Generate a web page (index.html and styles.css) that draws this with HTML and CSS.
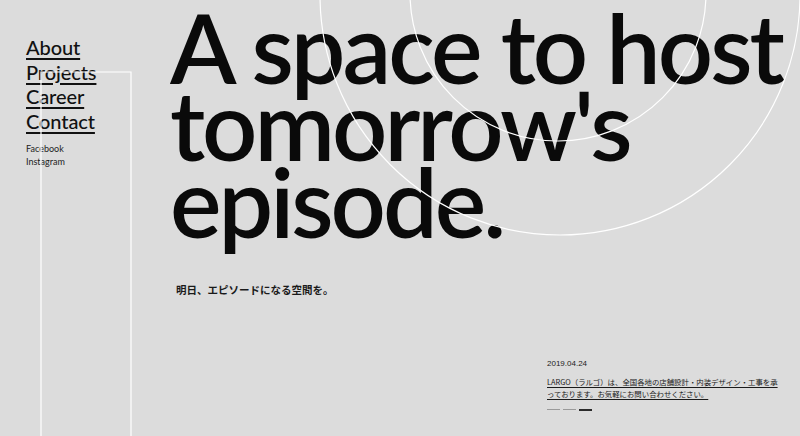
FILE: index.html
```html
<!DOCTYPE html>
<html lang="ja">
<head>
<meta charset="utf-8">
<title>LARGO</title>
<link rel="stylesheet" href="styles.css">
</head>
<body>
<div class="page">
  <nav class="side">
    <ul class="menu">
      <li><a href="#">About</a></li>
      <li><a href="#">Projects</a></li>
      <li><a href="#">Career</a></li>
      <li><a href="#">Contact</a></li>
    </ul>
    <ul class="social">
      <li><a href="#">Facebook</a></li>
      <li><a href="#">Instagram</a></li>
    </ul>
  </nav>
  <main class="main">
    <h1 class="headline">A space to host<br>tomorrow's<br>episode.</h1>
    <p class="sub">明日、エピソードになる空間を。</p>
    <section class="news">
      <p class="news-date">2019.04.24</p>
      <p class="news-text"><a href="#">LARGO（ラルゴ）は、全国各地の店舗設計・内装デザイン・工事を承っております。お気軽にお問い合わせください。</a></p>
      <div class="pager">
        <span class="dash"></span>
        <span class="dash"></span>
        <span class="dash is-active"></span>
      </div>
    </section>
  </main>
  <svg class="deco" width="800" height="436" viewBox="0 0 800 436" aria-hidden="true">
    <path d="M41 436 V72 H131 V436" fill="none" stroke="#ffffff" stroke-width="1.2"/>
    <circle cx="560" cy="-5" r="240" fill="none" stroke="#ffffff" stroke-width="1.2"/>
    <circle cx="558" cy="-7" r="148" fill="none" stroke="#ffffff" stroke-width="1.2"/>
  </svg>
</div>
</body>
</html>
```
FILE: styles.css
```css
html, body {
  margin: 0;
  padding: 0;
  background: #dcdcdc;
}

.page {
  position: relative;
  display: flex;
  width: 800px;
  height: 436px;
  overflow: hidden;
  background: #dcdcdc;
  color: #0b0b0b;
  font-family: "Lato", "Noto Sans CJK JP", sans-serif;
}

.side {
  width: 146px;
  padding: 35px 0 0 26px;
  flex: none;
}

.menu, .social {
  list-style: none;
  margin: 0;
  padding: 0;
}

.menu li {
  font-size: 20px;
  line-height: 24.6px;
  font-weight: 500;
  letter-spacing: -0.1px;
}

.menu a {
  color: #111;
  text-decoration: underline;
  text-decoration-thickness: 1.5px;
  text-underline-offset: 3px;
}

.social {
  margin-top: 10px;
}

.social li {
  font-size: 9px;
  line-height: 12.5px;
}

.social a {
  color: #222;
  text-decoration: none;
}

.main {
  flex: 1;
  display: flex;
  flex-direction: column;
  min-width: 0;
}

.headline {
  margin: 8px 0 0 -2px;
  font-size: 97px;
  line-height: 77px;
  font-weight: 600;
  letter-spacing: -3px;
  white-space: nowrap;
  color: #0a0a0a;
}

.sub {
  margin: 44px 0 0 4px;
  font-family: "Noto Sans CJK JP", sans-serif;
  font-size: 10.5px;
  line-height: 14px;
  font-weight: 700;
  letter-spacing: 0;
  color: #1a1a1a;
}

.news {
  margin: 61px 0 0 375px;
  width: 232px;
}

.news-date {
  margin: 0;
  font-family: "Liberation Sans", sans-serif;
  font-size: 8px;
  line-height: 12px;
  color: #222;
}

.news-text {
  margin: 6px 0 0;
  font-family: "Noto Sans CJK JP", sans-serif;
  font-size: 7.4px;
  line-height: 12px;
  color: #1a1a1a;
}

.news-text a {
  color: #1a1a1a;
  text-decoration: underline;
  text-underline-offset: 2px;
}

.pager {
  display: flex;
  gap: 3px;
  margin-top: 9px;
}

.dash {
  width: 13px;
  height: 1px;
  background: #9a9a9a;
}

.dash.is-active {
  height: 2px;
  background: #2a2a2a;
}

.deco {
  position: absolute;
  left: 0;
  top: 0;
  pointer-events: none;
}
```
